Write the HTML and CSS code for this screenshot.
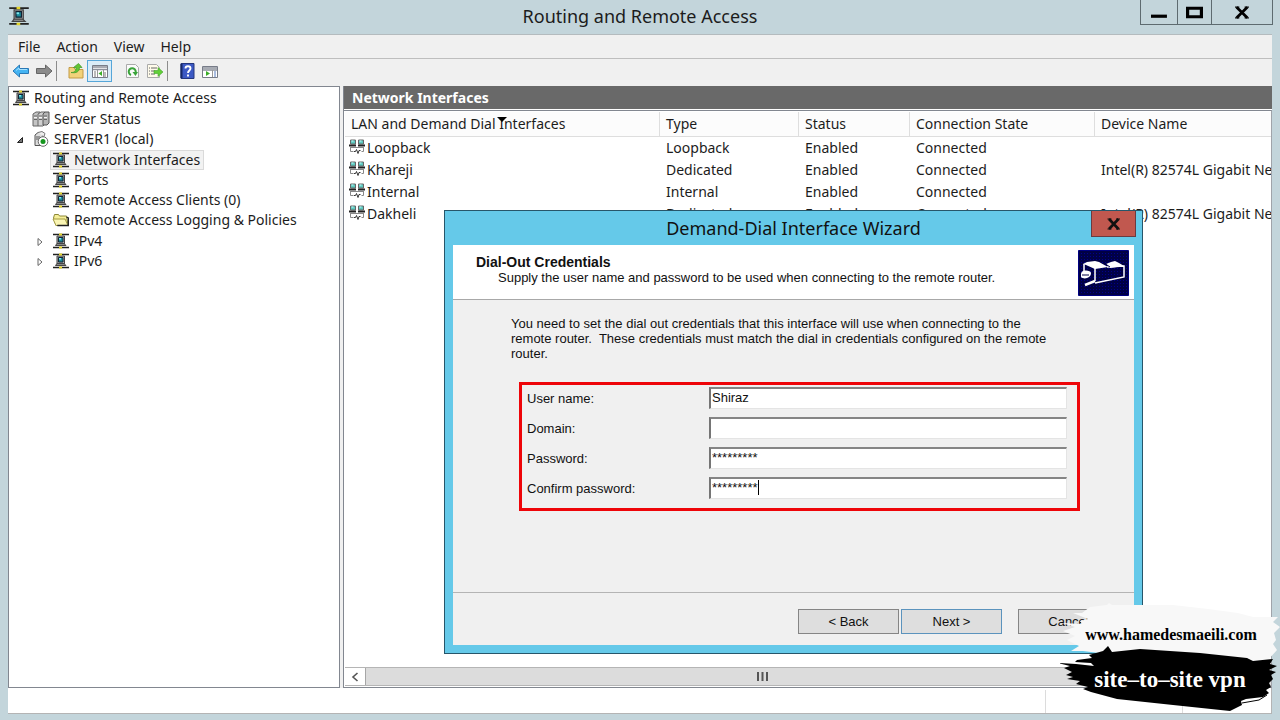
FILE: index.html
```html
<!DOCTYPE html>
<html lang="en">
<head>
<meta charset="utf-8">
<title>Routing and Remote Access</title>
<link rel="stylesheet" href="styles.css">
</head>
<body>
<svg class="sprite" aria-hidden="true">
  <symbol id="router" viewBox="0 0 18 16">
    <path d="M1 1.500h16M1 14.500h16" stroke="#222" stroke-width="1.500"/>
    <path d="M5 3h7.500v8h-7.500z" fill="#aaa" stroke="#444"/>
    <path d="M6.500 4.500h4.500v4.500h-4.500z" fill="#1b8c9c" stroke="#123"/>
    <path d="M7 5h2v1.500h-2z" fill="#7fe5ed"/>
    <path d="M3.500 12.500l1.500-2h7l2 2z" fill="#888" stroke="#444"/>
    <path d="M7 .5h3v2h-3zM7 13.500h3v2h-3z" fill="#e5d62b"/>
  </symbol>
  <symbol id="servers" viewBox="0 0 18 16">
    <path d="M1 3l3-2h4v12l-2 2h-5z" fill="#c4c4c4" stroke="#666"/>
    <path d="M6 3l3-2h4v12l-2 2h-5z" fill="#d0d0d0" stroke="#666"/>
    <path d="M11 3l2-2h4v11l-2 2h-4z" fill="#b5b5b5" stroke="#555"/>
    <path d="M2 5h3M2 8.500h3M7 5h3M7 8.500h3M12 5h3M12 8.500h3" stroke="#666"/>
    <path d="M2 6.500h3M7 6.500h3M12 6.500h3" stroke="#f5f5f5"/>
  </symbol>
  <symbol id="server-ok" viewBox="0 0 16 16">
    <path d="M2 4l3-2.500h5v11l-2 2h-6z" fill="#ddd" stroke="#555"/>
    <path d="M3 6h4M3 8h4" stroke="#555"/>
    <path d="M5 1.500l4-1 3 2-1 3" fill="#eee" stroke="#777"/>
    <circle cx="10" cy="10.500" r="4.800" fill="#fff" stroke="#666"/>
    <circle cx="10" cy="10.500" r="2.500" fill="#15951d"/>
  </symbol>
  <symbol id="folder" viewBox="0 0 18 16">
    <path d="M1.500 6l1-3.500h4l1 1.500h7l1.500 9.500h-12z" fill="#f6ef9a" stroke="#8c8736"/>
    <path d="M1 7h12l3 6.500h-12z" fill="#faf5b4" stroke="#a39c43"/>
    <path d="M14.500 5l1.800 1v7.500h-11" fill="none" stroke="#222" stroke-width="1.400"/>
  </symbol>
  <symbol id="nic" viewBox="0 0 18 16">
    <path d="M2.500 1h5v4h-5zM10.500 1h5v4h-5z" fill="#5cc9bf" stroke="#666"/>
    <path d="M3.500 2h2M11.500 2h2" stroke="#c8ffff"/>
    <path d="M1 6.500h7M10 6.500h7" stroke="#222" stroke-width="2"/>
    <path d="M3 8.500h12M2.500 8v4.500h3M15.500 8v4.500h-2" fill="none" stroke="#888"/>
    <path d="M6 12.500h1.500l1-2 1.500 4 1-3h1.500" fill="none" stroke="#333"/>
  </symbol>
</svg>

<main class="window">
  <header class="titlebar">
    <svg class="app-icon"><use href="#router"/></svg>
    <h1>Routing and Remote Access</h1>
    <div class="window-buttons">
      <button type="button" aria-label="Minimize"><svg viewBox="0 0 16 14"><path d="M0 10.500h15" stroke="#000" stroke-width="3"/></svg></button>
      <button type="button" aria-label="Maximize"><svg viewBox="0 0 16 14"><path d="M1.500 3h13v8h-13z" fill="none" stroke="#000" stroke-width="3"/></svg></button>
      <button type="button" class="wide" aria-label="Close"><svg viewBox="0 0 16 14"><path d="M2.500 2l10 10M12.500 2l-10 10" stroke="#000" stroke-width="2.600"/><path d="M1 2h4M10 2h4M1 12h4M10 12h4" stroke="#000" stroke-width="1.200"/></svg></button>
    </div>
  </header>

  <nav class="menubar">
    <button type="button">File</button>
    <button type="button">Action</button>
    <button type="button">View</button>
    <button type="button">Help</button>
  </nav>

  <div class="toolbar">
    <button type="button" aria-label="Back"><svg viewBox="0 0 18 16"><path d="M1 8l6.500-6v3.500h9v5h-9v3.500z" fill="#45b4f2" stroke="#2a78b5"/><path d="M4 7.500l3-2.500v1.500h8" fill="none" stroke="#a5e1ff"/></svg></button>
    <button type="button" aria-label="Forward"><svg viewBox="0 0 18 16"><path d="M17 8l-6.500-6v3.500h-9v5h9v3.500z" fill="#8b8b8b" stroke="#666"/></svg></button>
    <span class="divider"></span>
    <button type="button" aria-label="Up one level"><svg viewBox="0 0 18 16"><path d="M2 4.500h5l1 2h8v8.500h-14z" fill="#f2d27a" stroke="#c39a45"/><path d="M4 9.500c4 0 5-2 5-5h-2.500l5-4 3.500 4h-2.500c0 4-3 6-8.500 5z" fill="#63c431" stroke="#3d962a" stroke-width=".7"/></svg></button>
    <button type="button" class="pressed" aria-label="Show tree"><svg viewBox="0 0 18 16"><path d="M1.500 2.500h15v12h-15z" fill="#fff" stroke="#777c88"/><path d="M2 4h14M2 6.500h14" stroke="#8b909b" stroke-width="1.500"/><path d="M6.500 7v7M12.500 7v7" stroke="#999"/><path d="M3 9h2M3 11h2M3 13h2M14 9v5" stroke="#777"/><path d="M11 8v5l-3.500-2.500z" fill="#3cad28"/></svg></button>
    <button type="button" aria-label="Refresh"><svg viewBox="0 0 18 16"><path d="M3.500 1.500h9l3 3v10h-12z" fill="#fafafa" stroke="#aaa"/><path d="M8 12a3.500 3.500 0 1 1 4.500-2" fill="none" stroke="#3aa43a" stroke-width="2"/><path d="M9.500 9h5.500l-2.500 4z" fill="#3aa43a"/></svg></button>
    <button type="button" aria-label="Export list"><svg viewBox="0 0 18 16"><path d="M1.500 1.500h9l3 3v10h-12z" fill="#fffbea" stroke="#aaa"/><path d="M3 5h1M3 8h1M3 11h1M5 5h6M5 8h4M5 11h4" stroke="#666"/><path d="M8 7.500h4v-3l5 4.500-5 4.500v-3h-4z" fill="#63cf38" stroke="#43a62d" stroke-width=".6"/></svg></button>
    <span class="divider"></span>
    <button type="button" aria-label="Help"><svg viewBox="0 0 18 16"><path d="M3 .5h13v15h-13z" fill="#3c59c4" stroke="#24367d"/><path d="M3.500 1v14" stroke="#172866" stroke-width="2"/><path d="M7.500 5.500c0-3 5-3 5 0 0 2-2.500 2-2.500 4.500M10 11.500v2" fill="none" stroke="#fff" stroke-width="1.900"/></svg></button>
    <button type="button" aria-label="Show action pane"><svg viewBox="0 0 18 16"><path d="M1.500 3.500h15v11h-15z" fill="#fff" stroke="#777c88"/><path d="M2 5h14M2 7h14" stroke="#8b909b" stroke-width="1.500"/><path d="M11.500 7v7" stroke="#999"/><path d="M13 9h2M13 11h2M13 13h2" stroke="#557bc0"/><path d="M5 8v5l4-2.500z" fill="#3cad28"/></svg></button>
  </div>

  <div class="panes">
    <aside class="tree">
      <ul>
        <li><div class="node"><svg><use href="#router"/></svg><span>Routing and Remote Access</span></div>
          <ul>
            <li><div class="node"><svg><use href="#servers"/></svg><span>Server Status</span></div></li>
            <li><div class="node"><svg class="twisty" viewBox="0 0 8 8"><path d="M6.500 1.500v5h-5z" fill="#777" stroke="#222"/></svg><svg><use href="#server-ok"/></svg><span>SERVER1 (local)</span></div>
              <ul>
                <li><div class="node selected"><svg><use href="#router"/></svg><span>Network Interfaces</span></div></li>
                <li><div class="node"><svg><use href="#router"/></svg><span>Ports</span></div></li>
                <li><div class="node"><svg><use href="#router"/></svg><span>Remote Access Clients (0)</span></div></li>
                <li><div class="node"><svg><use href="#folder"/></svg><span>Remote Access Logging &amp; Policies</span></div></li>
                <li class="spaced"><div class="node"><svg class="twisty" viewBox="0 0 8 8"><path d="M2 0.500v7l4-3.500z" fill="#fff" stroke="#666"/></svg><svg><use href="#router"/></svg><span>IPv4</span></div></li>
                <li><div class="node"><svg class="twisty" viewBox="0 0 8 8"><path d="M2 0.500v7l4-3.500z" fill="#fff" stroke="#666"/></svg><svg><use href="#router"/></svg><span>IPv6</span></div></li>
              </ul>
            </li>
          </ul>
        </li>
      </ul>
    </aside>

    <section class="list">
      <h2>Network Interfaces</h2>
      <div class="list-body">
        <table>
          <colgroup><col class="c-name"><col class="c-type"><col class="c-status"><col class="c-state"><col></colgroup>
          <thead>
            <tr><th class="sorted">LAN and Demand Dial Interfaces<svg class="sort" viewBox="0 0 10 5"><path d="M0 0h10l-5 5z"/></svg></th><th>Type</th><th>Status</th><th>Connection State</th><th>Device Name</th></tr>
          </thead>
          <tbody>
            <tr><td><svg><use href="#nic"/></svg>Loopback</td><td>Loopback</td><td>Enabled</td><td>Connected</td><td></td></tr>
            <tr><td><svg><use href="#nic"/></svg>Khareji</td><td>Dedicated</td><td>Enabled</td><td>Connected</td><td>Intel(R) 82574L Gigabit Network Connection</td></tr>
            <tr><td><svg><use href="#nic"/></svg>Internal</td><td>Internal</td><td>Enabled</td><td>Connected</td><td></td></tr>
            <tr><td><svg><use href="#nic"/></svg>Dakheli</td><td>Dedicated</td><td>Enabled</td><td>Connected</td><td>Intel(R) 82574L Gigabit Network Connection</td></tr>
          </tbody>
        </table>
        <div class="scrollbar">
          <button type="button" aria-label="Scroll left"><svg viewBox="0 0 8 10"><path d="M6.500 1l-4.500 4 4.500 4" fill="none" stroke="#555" stroke-width="1.600"/></svg></button>
          <div class="thumb"><svg viewBox="0 0 11 9"><path d="M1 0v9M5.500 0v9M10 0v9" stroke="#555" stroke-width="2"/></svg></div>
        </div>
      </div>
    </section>
  </div>

  <footer class="statusbar"><span></span><span></span></footer>
</main>

<section class="dialog" role="dialog" aria-labelledby="wizard-title">
  <header class="dialog-title">
    <h2 id="wizard-title">Demand-Dial Interface Wizard</h2>
    <button type="button" class="close" aria-label="Close wizard"><svg viewBox="0 0 16 14"><path d="M3 2l9.500 10M12.500 2l-9.500 10" stroke="#111" stroke-width="2.600"/><path d="M1.500 2h4M10 2h4M1.500 12h4M10 12h4" stroke="#111" stroke-width="1.200"/></svg></button>
  </header>
  <form class="dialog-body">
    <div class="banner">
      <div>
        <h3>Dial-Out Credentials</h3>
        <p>Supply the user name and password to be used when connecting to the remote router.</p>
      </div>
      <svg class="banner-art" viewBox="0 0 51 46">
        <defs><pattern id="dots" width="3" height="3" patternUnits="userSpaceOnUse"><path d="M0 0h3v3h-3z" fill="#000045"/><path d="M0 0h1v1h-1z" fill="#00008c"/></pattern></defs>
        <path d="M.5 .5h50v45h-50z" fill="url(#dots)" stroke="#000080"/>
        <path d="M5 14l4-2 8-1 4 1 9 5-13 2-9-4z" fill="#fff"/>
        <path d="M28 14l5-2 4-1 4 2 5 3-14 2z" fill="#fff"/>
        <path d="M6 14v9M17 18v13M29 17l17-1v11l-29 6" fill="none" stroke="#fff" stroke-width="1.500"/>
        <path d="M3 24c0-5 10-4 10-1 0 5-7 7-10 4z" fill="#fff"/>
        <path d="M7 35l10-4" stroke="#fff" stroke-width="2.500"/>
        <path d="M4 25h7M26 13l6 4" stroke="#000045"/>
      </svg>
    </div>
    <div class="content">
      <p>You need to set the dial out credentials that this interface will use when connecting to the remote router.&nbsp; These credentials must match the dial in credentials configured on the remote router.</p>
      <div class="fields">
        <label for="user">User name:</label><input id="user" type="text" value="Shiraz">
        <label for="domain">Domain:</label><input id="domain" type="text">
        <label for="pass">Password:</label><input id="pass" type="text" value="*********">
        <label for="confirm">Confirm password:</label><div class="field"><input id="confirm" type="text" value="*********"><span class="caret"></span></div>
      </div>
    </div>
    <div class="actions">
      <button type="button">&lt; Back</button>
      <button type="button" class="default">Next &gt;</button>
      <button type="button" class="cancel">Cancel</button>
    </div>
  </form>
</section>

<div class="brand">
  <svg viewBox="0 0 220 120" aria-hidden="true">
    <path d="M13 13l9 0 8-6 17-2 2-2 3 2 61 0 35 4 30 4 15 4 25 0-5 5 7 5-6 6 2 7-3 4 4 6-10 11-14 3-130-8-40-5-12 0 8-5-12-6 8-4-12-5 12-4-13-4 20 1-2-3 8-2z" fill="#f8f8f8"/>
    <path d="M17 60l15-2-3-3 14-4 5-5 4 6 28-3 60 4 47 5 6 3 20-2-3 5 7 2-8 4 7 2-5 3 2 4-4 4 2 4-5 3 3 3-6 4-17 2-5 2 1 4-12 6-57-6-56-6-26-7-8-3 5-2-12-3 4-3-13-2 6-2-7-2 6-3-8-4 6-2-12-3 18 1 18 2-3-3-16-1z" fill="#000"/>
    <path d="M182 103l17-3 8-5" stroke="#000" fill="none"/>
  </svg>
  <p class="site">www.hamedesmaeili.com</p>
  <p class="topic">site–to–site vpn</p>
</div>
</body>
</html>
```
FILE: styles.css
```css
* { box-sizing: border-box; }
body {
  margin: 0;
  height: 100vh;
  position: relative;
  overflow: hidden;
  background: #c3d5db;
  color: #1c1c1c;
  font: 14px/20px "Noto Sans", "Open Sans", sans-serif;
}
h1, h2, h3, p, ul { margin: 0; padding: 0; font-weight: normal; }
ul { list-style: none; }
button { font: inherit; color: inherit; padding: 0; border: 0; background: none; }
.sprite { position: absolute; width: 0; height: 0; }

.window { height: 100%; display: flex; flex-direction: column; padding: 0 8px 6px; }
.titlebar { display: grid; grid-template-columns: 132px 1fr 132px; height: 34px; }
.app-icon { width: 22px; height: 20px; margin-top: 6px; }
.titlebar h1 { text-align: center; font-size: 18px; line-height: 33px; }
.window-buttons { display: flex; height: 25px; border: 1px solid #5e6b70; border-top: 0; margin-right: -1px; }
.window-buttons button { flex: 37; display: grid; place-items: center; }
.window-buttons button + button { flex: 34; border-left: 1px solid #5e6b70; }
.window-buttons .wide.wide { flex: 61; }
.window-buttons svg { width: 17px; height: 15px; }

.menubar { display: flex; gap: 16px; padding: 0 10px; height: 25px; background: #f0f0f0; border-top: 1px solid #b4bbbe; border-bottom: 1px solid #bebebe; }
.toolbar { display: flex; align-items: center; height: 27px; padding: 0 1px 4px; background: #f0f0f0; }
.toolbar button { width: 23px; height: 22px; display: grid; place-items: center; }
.toolbar svg { width: 18px; height: 16px; }
.toolbar .pressed { width: 25px; background: #d9ecf8; border: 1px solid #56a6d9; margin-right: 8px; }
.divider { width: 1px; height: 20px; background: #8d8d8d; margin: 0 7px 0 1px; }

.panes { flex: 1; display: flex; gap: 3px; min-height: 0; background: #f0f0f0; }
.tree { width: 332px; background: #fff; border: 1px solid #828790; padding: 1px 0 0 1px; }
.tree ul ul { margin: 1px 0 0 20px; }
.spaced { margin-top: 1px; }
.node { position: relative; display: flex; align-items: center; width: max-content; height: 20px; padding: 0 3px 0 1px; gap: 4px; border: 1px solid transparent; }
.node svg { width: 18px; height: 16px; }
.node .twisty { position: absolute; left: -15px; top: 6px; width: 8px; height: 8px; }
.selected { background: #f2f2f2; border-color: #dadada; }

.list { flex: 1; min-width: 0; display: flex; flex-direction: column; border-left: 1px solid #828790; background: #fff; }
.list h2 { height: 23px; padding-left: 8px; background: #696969; color: #fff; font-size: 14px; font-weight: bold; line-height: 23px; }
.list-body { flex: 1; display: flex; flex-direction: column; justify-content: space-between; overflow: hidden; border-top: 1px solid #828790; border-right: 1px solid #a0a4aa; border-bottom: 1px solid #828790; margin-top: 1px; padding: 1px 0 1px 1px; }
table { width: 100%; table-layout: fixed; border-collapse: separate; border-spacing: 0; }
.c-name { width: 315px; }
.c-type { width: 139px; }
.c-status { width: 111px; }
.c-state { width: 185px; }
th { height: 25px; padding: 0 0 0 6px; font-weight: normal; text-align: left; white-space: nowrap; background: #fcfcfc; border-right: 1px solid #dedede; border-bottom: 1px solid #dedede; }
td { height: 22px; padding: 0 0 0 6px; white-space: nowrap; overflow: hidden; }
td:first-child { padding-left: 3px; }
td svg { width: 18px; height: 16px; margin-right: 1px; vertical-align: -2px; }
th:last-child { border-right: 0; }
.sorted { position: relative; }
.sort { position: absolute; left: 152px; top: 5px; width: 10px; height: 5px; }
.scrollbar { display: flex; height: 19px; border-top: 1px solid #b5b5b5; border-bottom: 1px solid #b5b5b5; }
.scrollbar button { width: 21px; display: grid; place-items: center; background: #fff; border-right: 1px solid #a6a6a6; }
.scrollbar button svg { width: 8px; height: 10px; }
.thumb { flex: 1; display: grid; place-items: center; background: #dcdcdc; padding-right: 112px; }
.thumb svg { width: 11px; height: 9px; }
.statusbar { display: flex; justify-content: flex-end; height: 26px; padding-top: 2px; background: #fff; border: 1px solid #b4b4b4; border-width: 0 1px 1px 0; }
.statusbar span { width: 137px; border-left: 1px solid #dcdcdc; }
.statusbar span:last-child { width: 89px; }

.dialog { position: absolute; left: 444px; top: 210px; width: 699px; height: 444px; display: flex; flex-direction: column; padding: 0 8px 8px; background: #65c9e9; border: 1px solid #27566a; font: 13px/15px "Liberation Sans", Arial, sans-serif; color: #111; }
.dialog-title { position: relative; height: 34px; }
.dialog-title h2 { text-align: center; font: 18px/34px "Noto Sans", "Open Sans", sans-serif; }
.close { position: absolute; right: -2px; top: 0; width: 45px; height: 26px; display: grid; place-items: center; background: #c1584f; border: 1px solid #6b3a40; border-top: 0; }
.close svg { width: 16px; height: 14px; }
.dialog-body { flex: 1; display: flex; flex-direction: column; background: #f0f0f0; }
.banner { display: flex; justify-content: space-between; height: 55px; padding: 5px 5px 0 23px; background: #fff; border-bottom: 1px solid #a8a8a8; }
.banner h3 { font-size: 14px; line-height: 15px; margin-top: 5px; font-weight: bold; }
.banner p { padding-left: 22px; }
.banner-art { width: 51px; height: 46px; }
.content { flex: 1; padding: 16px 54px 0 58px; }
.content p { max-width: 550px; }
.fields { display: grid; grid-template-columns: 182px 1fr; align-items: center; row-gap: 8px; margin: 21px 0 0 8px; padding: 2px 10px 10px 5px; border: 3px solid #ee0509; height: 129px; }
.fields input { display: block; width: 100%; height: 22px; padding: 0 1px 2px; border: 1px solid #e4e4e4; border-top: 2px solid #858585; border-left: 2px solid #757575; background: #fff; font: inherit; color: inherit; }
.field { position: relative; }
.caret { position: absolute; left: 49px; top: 3px; width: 1px; height: 15px; background: #000; }
.actions { display: flex; justify-content: flex-end; gap: 2px; height: 53px; padding: 16px 15px 0 0; border-top: 1px solid #b4b4b4; }
.actions button { width: 101px; height: 25px; background: #dedede; border: 1px solid #858585; }
.actions .default { border-color: #5b93bd; }
.actions .cancel { margin-left: 14px; }

.brand { position: absolute; right: 0; bottom: 0; width: 220px; height: 120px; text-align: center; font-family: "Liberation Serif", serif; white-space: nowrap; }
.brand svg { position: absolute; inset: 0; width: 100%; height: 100%; }
.brand p { position: relative; font-weight: bold; }
.site { padding: 25px 0 0 2px; font-size: 16px; line-height: 20px; color: #000; }
.topic { padding-top: 20px; font-size: 23px; line-height: 30px; color: #fff; }
```
